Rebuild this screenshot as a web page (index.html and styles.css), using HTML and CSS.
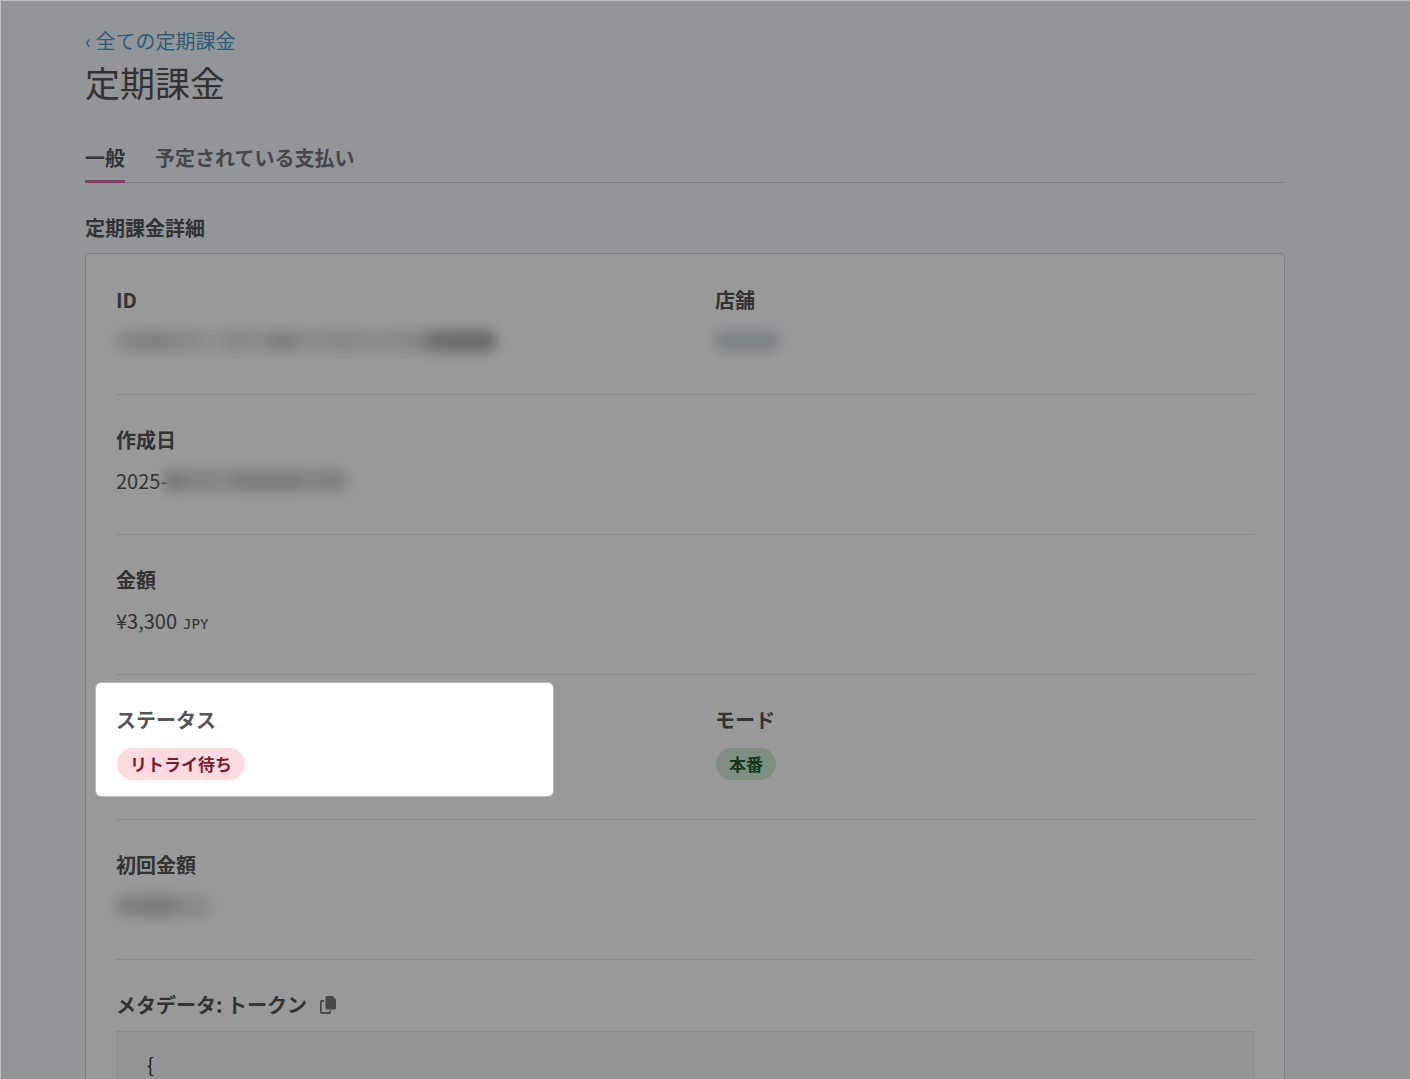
FILE: index.html
```html
<!DOCTYPE html>
<html lang="ja">
<head>
<meta charset="utf-8">
<title>定期課金</title>
<meta name="viewport" content="width=device-width, initial-scale=1">
<link rel="stylesheet" href="styles.css">
</head>
<body>
<main class="page">
  <header>
    <a class="back" href="#all">‹ 全ての定期課金</a>
    <h1 class="title">定期課金</h1>
  </header>
  <nav class="tabs">
    <a class="tab tab-active" href="#general" aria-current="page">一般</a>
    <a class="tab" href="#scheduled">予定されている支払い</a>
  </nav>
  <h2 class="section-title">定期課金詳細</h2>
  <section class="card">
    <div class="row">
      <div class="cell">
        <h3 class="label">ID</h3>
        <p class="value"><span class="redacted redacted-id"></span></p>
      </div>
      <div class="cell">
        <h3 class="label">店舗</h3>
        <p class="value"><span class="redacted redacted-store"></span></p>
      </div>
    </div>
    <div class="row">
      <div class="cell">
        <h3 class="label">作成日</h3>
        <p class="value">2025-<span class="redacted redacted-date"></span></p>
      </div>
    </div>
    <div class="row">
      <div class="cell">
        <h3 class="label">金額</h3>
        <p class="value amount">¥3,300 <span class="currency">JPY</span></p>
      </div>
    </div>
    <div class="row">
      <div class="cell">
        <div class="spotlight"></div>
        <h3 class="label">ステータス</h3>
        <p class="value value-badge"><span class="badge badge-danger">リトライ待ち</span></p>
      </div>
      <div class="cell">
        <h3 class="label">モード</h3>
        <p class="value value-badge"><span class="badge badge-success">本番</span></p>
      </div>
    </div>
    <div class="row">
      <div class="cell">
        <h3 class="label">初回金額</h3>
        <p class="value"><span class="redacted redacted-first"></span></p>
      </div>
    </div>
    <div class="metadata">
      <div class="metadata-head">
        <h3 class="label">メタデータ: トークン</h3>
        <button class="copy" type="button" aria-label="コピー">
          <svg width="16" height="18" viewBox="0 0 16 18" aria-hidden="true">
            <path d="M4 5H1.8Q.8 5 .8 6v10q0 1 1 1h7.4q1 0 1-1v-1.500" fill="none" stroke="currentColor" stroke-width="1.8"/>
            <path d="M7 0h5.400L16 3.400V12q0 1.500-1.500 1.500H7Q5.500 13.500 5.500 12V1.500Q5.500 0 7 0z" fill="currentColor"/>
          </svg>
        </button>
      </div>
      <pre class="code">{</pre>
    </div>
  </section>
</main>
</body>
</html>
```
FILE: styles.css
```css
* { box-sizing: border-box; }

body {
  margin: 0;
  min-height: 100vh;
  padding: 1px 0 0 1px;
  display: flex;
  background: #bcc2c5;
  color: #555;
  font: 20px/30px "Noto Sans CJK JP", sans-serif;
}

h1, h2, h3, p, pre { margin: 0; font-size: inherit; }

.page {
  flex: 1;
  display: flex;
  flex-direction: column;
  padding: 25px 125px 0 84px;
  overflow: hidden;
  background: #f3faff;
}

.back {
  color: #4a9dca;
  text-decoration: none;
}

.title {
  font-size: 35px;
  line-height: 52px;
  font-weight: 400;
}

.tabs {
  display: flex;
  gap: 30px;
  margin-top: 35px;
  box-shadow: inset 0 -1px #d5d5d5;
}

.tab {
  padding-bottom: 7px;
  border-bottom: 3px solid transparent;
  color: #777;
  font-weight: 700;
  text-decoration: none;
}

.tab-active {
  border-color: #e661a3;
  color: #555;
}

.section-title {
  margin: 30px 0 10px;
  font-weight: 700;
}

.card {
  flex: 1;
  display: flex;
  flex-direction: column;
  padding: 1px 30px 0;
  border: 1px solid #d5d5d5;
  border-bottom: 0;
  border-radius: 5px 5px 0 0;
  background: #fff;
}

.row {
  display: grid;
  grid-template-columns: 1fr 1fr;
  gap: 60px;
  padding: 30px 0 38px;
  border-bottom: 1px solid #e6e6e6;
}

.cell {
  position: relative;
  display: flex;
  flex-direction: column;
  gap: 11px;
}

.label { font-weight: 700; }

.value {
  display: flex;
  align-items: center;
  min-height: 30px;
}

.value-badge { min-height: 35px; }

.amount {
  align-items: baseline;
  gap: 6px;
}

.currency { font: 14px/20px "DejaVu Sans Mono", monospace; }

.badge {
  margin-left: 1px;
  padding: 0 13px;
  border-radius: 16px;
  font-size: 17px;
  line-height: 32px;
  font-weight: 700;
}

.badge-danger { background: #ffdbe1; color: #7a1a2a; }
.badge-success { background: #d4edda; color: #1c5e30; }

/* Hidden values */
.redacted {
  height: 22px;
  border-radius: 8px;
  filter: blur(6px);
}

.redacted-id {
  width: 380px;
  background: linear-gradient(90deg, #e4e4e4 0, #d6d6d6 10%, #e8e8e8 22%, #f2f2f2 25%, #dedede 32%, #eaeaea 37%, #d2d2d2 43%, #eaeaea 51%, #dedede 60%, #ececec 68%, #dcdcdc 80%, #b8b8b8 84%, #b0b0b0 100%);
}

.redacted-store { width: 64px; background: #cfdce3; }

.redacted-date {
  width: 184px;
  margin-left: -4px;
  background: linear-gradient(90deg, #c4c4c4 0, #d4d4d4 12%, #dedede 20%, #d6d6d6 25%, #e4e4e4 31%, #d2d2d2 42%, #d2d2d2 75%, #e0e0e0 80%, #d2d2d2 90%, #d8d8d8 100%);
}

.redacted-first {
  width: 94px;
  background: linear-gradient(90deg, #d8d8d8 0, #cccccc 50%, #e0e0e0 70%, #e6e6e6 100%);
}

/* Window in the dimming layer */
.spotlight {
  position: absolute;
  z-index: 10;
  top: -22px;
  bottom: -15px;
  left: -20px;
  width: 457px;
  border-radius: 5px;
  box-shadow: 0 0 0 1px rgba(255, 255, 255, .3), 0 0 0 4000px rgba(0, 0, 0, .4);
  pointer-events: none;
}

.metadata {
  flex: 1;
  display: flex;
  flex-direction: column;
  gap: 11px;
  padding-top: 30px;
}

.metadata-head {
  display: flex;
  align-items: center;
  gap: 13px;
}

.copy {
  display: flex;
  padding: 0;
  border: 0;
  background: none;
  color: #777;
}

.code {
  flex: 1;
  padding: 20px 30px 0;
  border: 1px solid #e6e6e6;
  border-bottom: 0;
  background: #f8f8f8;
  color: #2a3145;
  font: inherit;
  line-height: 26px;
}
```
